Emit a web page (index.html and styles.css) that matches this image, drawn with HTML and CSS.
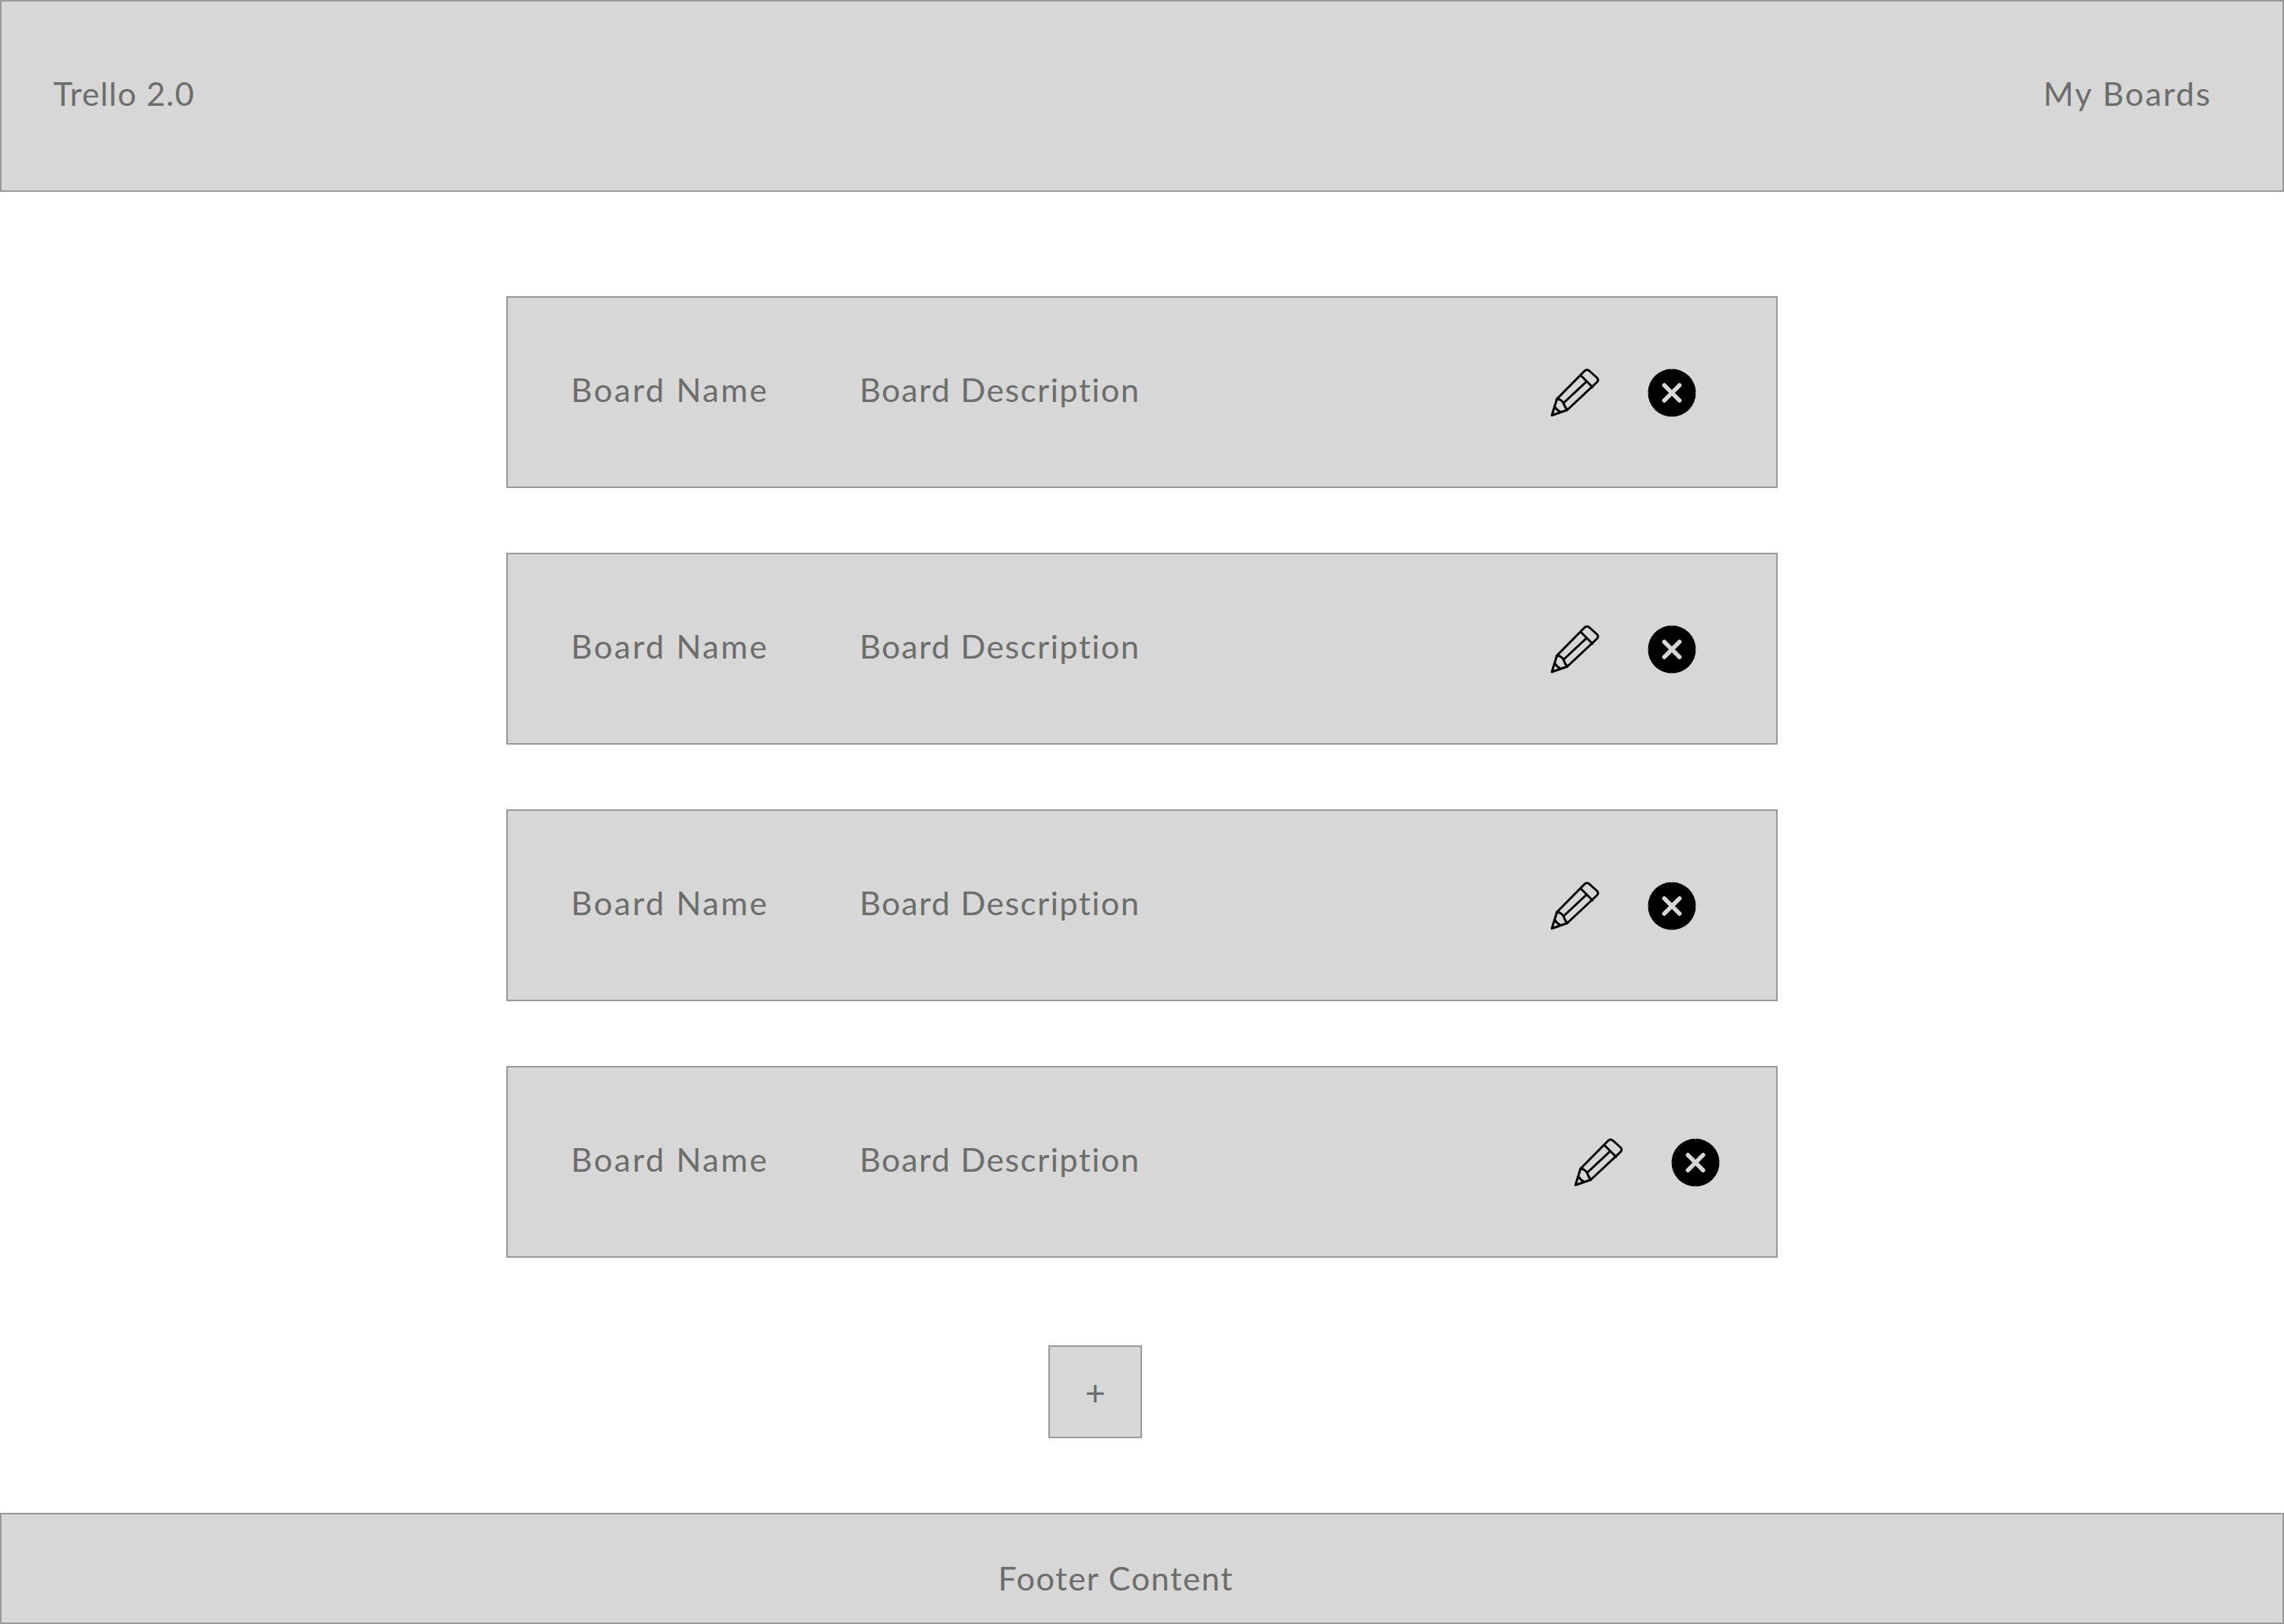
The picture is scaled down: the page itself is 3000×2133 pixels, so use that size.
FILE: index.html
```html
<!DOCTYPE html>
<html lang="en">
<head>
  <meta charset="UTF-8">
  <meta name="viewport" content="width=device-width, initial-scale=1.0">
  <title>Trello 2.0</title>
  <link rel="stylesheet" href="styles.css">
</head>
<body>

  <svg class="icon-defs" width="0" height="0">
    <symbol id="pencil" viewBox="0 0 64 64">
      <g fill="none" stroke="#000" stroke-width="3" stroke-linejoin="round" stroke-linecap="round">
        <path d="M1.300 61.500 L8 40 L44.500 3 Q47.500 0.500 50.500 3 L60.500 12 Q63.500 15 60.500 18 L21.500 54.500 Z"/>
        <path d="M39.700 9.500 L54.700 24.500"/>
        <path d="M47 17 L16.500 45.500"/>
        <path d="M8 40 Q13.500 40.500 16.500 45 Q18 50 21.500 54.500"/>
        <path d="M5 50 Q7.500 54.500 12.500 57"/>
      </g>
    </symbol>
    <symbol id="remove" viewBox="0 0 64 64">
      <circle cx="32" cy="32" r="31.500" fill="#000"/>
      <path d="M32 0 V1.500 M32 62.500 V64 M0 32 H1.500 M62.500 32 H64" fill="none" stroke="#d7d7d7" stroke-width="1.200"/>
      <path d="M22 22 L42 42 M42 22 L22 42" fill="none" stroke="#d7d7d7" stroke-width="5.500" stroke-linecap="round"/>
    </symbol>
  </svg>

  <header class="site-header">
    <span class="site-title">Trello 2.0</span>
    <span class="site-nav">My Boards</span>
  </header>

  <main class="boards">
    <div class="board-row">
      <span class="board-name">Board Name</span>
      <span class="board-desc">Board Description</span>
      <div class="board-actions">
        <svg class="icon"><use href="#pencil"/></svg>
        <svg class="icon"><use href="#remove"/></svg>
      </div>
    </div>
    <div class="board-row">
      <span class="board-name">Board Name</span>
      <span class="board-desc">Board Description</span>
      <div class="board-actions">
        <svg class="icon"><use href="#pencil"/></svg>
        <svg class="icon"><use href="#remove"/></svg>
      </div>
    </div>
    <div class="board-row">
      <span class="board-name">Board Name</span>
      <span class="board-desc">Board Description</span>
      <div class="board-actions">
        <svg class="icon"><use href="#pencil"/></svg>
        <svg class="icon"><use href="#remove"/></svg>
      </div>
    </div>
    <div class="board-row board-row-last">
      <span class="board-name">Board Name</span>
      <span class="board-desc">Board Description</span>
      <div class="board-actions">
        <svg class="icon"><use href="#pencil"/></svg>
        <svg class="icon"><use href="#remove"/></svg>
      </div>
    </div>
  </main>

  <div class="add-wrap">
    <div class="add-btn">+</div>
  </div>

  <footer class="site-footer">Footer Content</footer>

</body>
</html>
```

FILE: styles.css
```css
body {
  margin: 0;
  background: #fff;
  color: #6b6e6a;
  font-family: 'Lato', 'Open Sans', sans-serif;
  font-size: 43px;
  letter-spacing: 1px;
}

.icon-defs {
  display: block;
  height: 0;
}

.site-header {
  box-sizing: border-box;
  display: flex;
  justify-content: space-between;
  height: 252px;
  padding: 0 93px 8px 68px;
  align-items: center;
  background: #d7d7d7;
  border: 2px solid #999;
}

.site-title {
  letter-spacing: 1.2px;
}

.site-nav {
  letter-spacing: 2.1px;
}

.boards {
  display: flex;
  flex-direction: column;
  gap: 85px;
  width: 1670px;
  margin: 137px auto 0;
}

.board-row {
  box-sizing: border-box;
  display: flex;
  align-items: center;
  height: 252px;
  padding: 0 105px 0 83px;
  background: #d7d7d7;
  border: 2px solid #999;
}

/* last row icons sit further right in the mockup */
.board-row-last {
  padding-right: 74px;
}

.board-name {
  width: 379px;
  margin-bottom: 7px;
  letter-spacing: 2.5px;
}

.board-desc {
  margin-bottom: 7px;
  letter-spacing: 1.6px;
}

.board-actions {
  display: flex;
  gap: 63px;
  margin-top: 2px;
  margin-left: auto;
}

.icon {
  display: block;
  width: 64px;
  height: 64px;
}

.add-wrap {
  display: flex;
  padding-left: 1377px;
  margin-top: 115px;
}

.add-btn {
  box-sizing: border-box;
  display: flex;
  align-items: center;
  justify-content: center;
  width: 123px;
  height: 122px;
  background: #d7d7d7;
  border: 2px solid #999;
  font-size: 46px;
  letter-spacing: 0;
}

.site-footer {
  box-sizing: border-box;
  height: 146px;
  margin-top: 98px;
  padding: 58px 0 0 1309px;
  background: #d7d7d7;
  border: 2px solid #999;
  letter-spacing: 1.5px;
}
```
